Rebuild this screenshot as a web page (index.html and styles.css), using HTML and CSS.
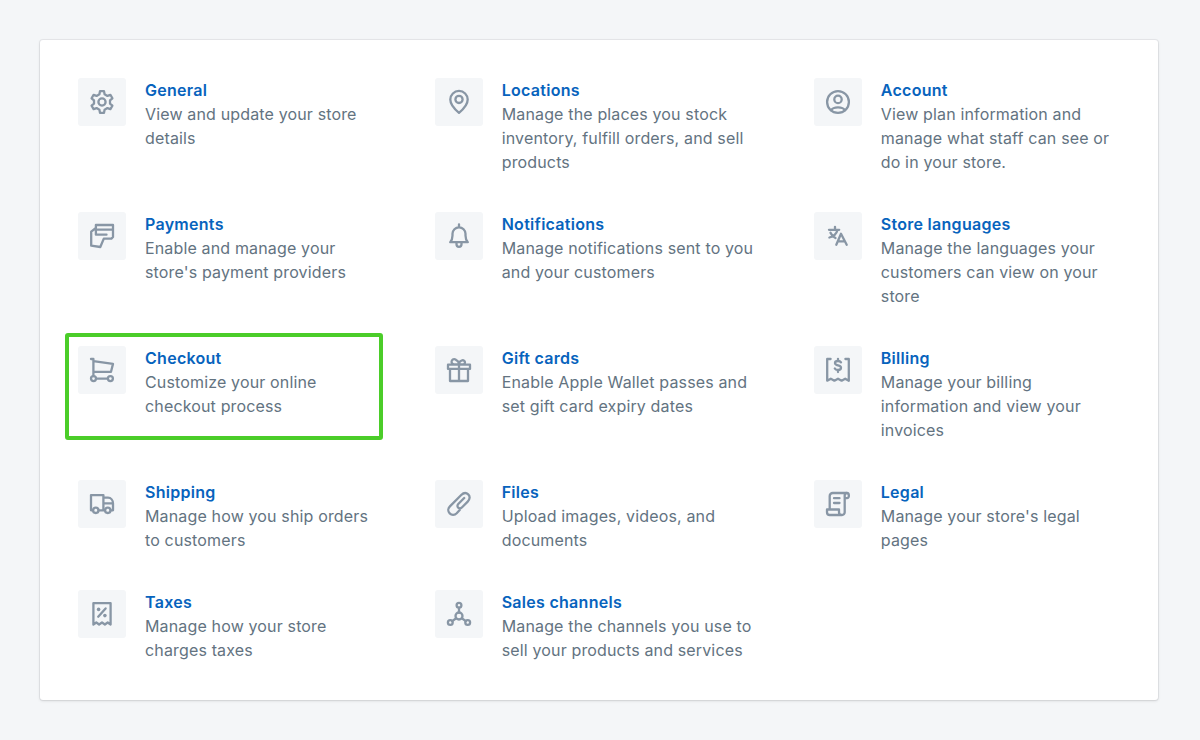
FILE: index.html
```html
<!DOCTYPE html>
<html lang="en">
<head>
<meta charset="utf-8">
<title>Settings</title>
<link rel="stylesheet" href="styles.css">
</head>
<body>
<main class="card">
  <a class="item"><span class="icon"><svg viewBox="0 0 24 24"><g transform="translate(12 12)"><path d="M-2.600-7.700-2-10.900H2L2.600-7.700 5.400-6.100 8.400-7.200 10.400-3.700 8-1.600V1.600L10.400 3.700 8.400 7.200 5.400 6.100 2.600 7.700 2 10.900H-2L-2.600 7.700-5.400 6.100-8.400 7.200-10.400 3.700-8 1.600V-1.600L-10.400-3.700-8.400-7.200-5.400-6.100Z"/><circle r="3.600"/></g></svg></span>
    <span class="text"><strong>General</strong><span>View and update your store<br>details</span></span></a>
  <a class="item"><span class="icon"><svg viewBox="0 0 24 24"><path d="M12 22.800C9.500 20.800 3.300 15.800 3.300 9.600a8.700 8.700 0 0 1 17.400 0c0 6.200-6.200 11.200-8.700 13.200Z"/><circle cx="12" cy="9.400" r="3.600"/></svg></span>
    <span class="text"><strong>Locations</strong><span>Manage the places you stock<br>inventory, fulfill orders, and sell<br>products</span></span></a>
  <a class="item"><span class="icon"><svg viewBox="0 0 24 24"><circle cx="12" cy="12" r="10.900"/><circle cx="12" cy="9.400" r="3.700"/><path d="M5 20.300c1.200-2 4-3 7-3s5.800 1 7 3"/></svg></span>
    <span class="text"><strong>Account</strong><span>View plan information and<br>manage what staff can see or<br>do in your store.</span></span></a>

  <a class="item"><span class="icon"><svg viewBox="0 0 24 24"><path d="M16.500 10.700H5.900V1H23v12l-1.600 1.600h-7.600L10.300 23 1.200 21.700V7.600L5.900 4M5.900 5.700H23"/></svg></span>
    <span class="text"><strong>Payments</strong><span>Enable and manage your<br>store's payment providers</span></span></a>
  <a class="item"><span class="icon"><svg viewBox="0 0 24 24"><path d="M12 .3v3M3.200 18.200h17.600c-1.500-1.700-2.300-3.400-2.300-6.700V9.800a6.500 6.500 0 0 0-13 0v1.700c0 3.300-.8 5-2.300 6.700ZM9.500 18.500v1.800a2.500 2.500 0 0 0 5 0v-1.800"/></svg></span>
    <span class="text"><strong>Notifications</strong><span>Manage notifications sent to you<br>and your customers</span></span></a>
  <a class="item"><span class="icon"><svg viewBox="0 0 24 24"><path d="M3 5.800h10.200M9 2.800v3M11.500 6C10.500 9.700 7.500 12.600 3.400 13.500M4.500 8.800c1 2.500 3 4.200 5 5.200M10.300 20.800 15 9.800l5.700 11M12 17.300h6.800"/></svg></span>
    <span class="text"><strong>Store languages</strong><span>Manage the languages your<br>customers can view on your<br>store</span></span></a>

  <a class="item highlighted"><span class="icon"><svg viewBox="0 0 24 24"><path d="M1 1h2.400v17M3.400 3.200 23 5.900l-2 7.900H3.400M6.300 20.600h11.400"/><circle cx="3.500" cy="20.600" r="2.500"/><circle cx="20.400" cy="20.600" r="2.500"/></svg></span>
    <span class="text"><strong>Checkout</strong><span>Customize your online<br>checkout process</span></span></a>
  <a class="item"><span class="icon"><svg viewBox="0 0 24 24"><path d="M1 6.700h22v4.200H1ZM3 10.900V23h18V10.900M12 6.700V23M12 6.500H7.200a2.700 2.700 0 1 1 2.300-4.200C11 3 12 4.500 12 6.500ZM12 6.500c0-2 1-3.500 2.700-4a2.200 2.200 0 1 1 1.800 4Z"/></svg></span>
    <span class="text"><strong>Gift cards</strong><span>Enable Apple Wallet passes and<br>set gift card expiry dates</span></span></a>
  <a class="item"><span class="icon"><svg viewBox="0 0 24 24"><path d="M4.600 1H1.200v21.700l3.600-2 3.600 2 3.600-2 3.600 2 3.600-2 3.600 2V1h-3.400M15 4.300C14.500 3.500 13.500 3 12 3c-1.800 0-3 .8-3 2.100 0 3.200 6 1.500 6 4.700 0 1.400-1.200 2.200-3 2.200-1.600 0-2.700-.5-3.200-1.500M12 .8V3M12 12v2"/></svg></span>
    <span class="text"><strong>Billing</strong><span>Manage your billing<br>information and view your<br>invoices</span></span></a>

  <a class="item"><span class="icon"><svg viewBox="0 0 24 24"><path d="M3 18.300H1V3.100h12.400v15.200H8.600M13.400 5.700H18c3 0 5 2.700 5 5.800v6.800h-2.300M13.400 11.400H23M13.400 18.300h1.500"/><circle cx="5.800" cy="18.300" r="2.700"/><circle cx="17.800" cy="18.300" r="2.700"/></svg></span>
    <span class="text"><strong>Shipping</strong><span>Manage how you ship orders<br>to customers</span></span></a>
  <a class="item"><span class="icon"><svg viewBox="0 0 24 24"><path d="m12.700 18-3 3.200c-2 2-5 2.200-7 .2s-1.800-5 .2-7L14.200 3c2.200-2.200 5-2.600 7-.7s1.900 4.900-.5 7.300l-5.600 5.600c-1.300 1.300-2.800 1.400-3.900.4s-1-2.600.3-3.900L17.200 6"/></svg></span>
    <span class="text"><strong>Files</strong><span>Upload images, videos, and<br>documents</span></span></a>
  <a class="item"><span class="icon"><svg viewBox="0 0 24 24"><path d="M20.200 1H6.700a3 3 0 0 0-3 3v13.500M16.300 23H3.800A2.800 2.800 0 0 1 1 20.200v-2.700h12v2.700A2.800 2.800 0 0 0 15.800 23h.2a2.700 2.700 0 0 0 2.700-2.700V3.600A2.500 2.500 0 0 1 21 1c2.500.2 2.500 5.200 0 5.200h-2.300M8 6.200h5.500M8 11h5.500"/></svg></span>
    <span class="text"><strong>Legal</strong><span>Manage your store's legal<br>pages</span></span></a>

  <a class="item"><span class="icon"><svg viewBox="0 0 24 24"><path d="M3.400 22.500V1.200h17.200v21.300l-2.900-2-2.800 2-2.900-2-2.900 2-2.800-2ZM15.600 6.400l-7.400 8.300"/><g class="solid"><circle cx="8.600" cy="7.400" r="1.800"/><circle cx="14.900" cy="13.600" r="1.800"/></g></svg></span>
    <span class="text"><strong>Taxes</strong><span>Manage how your store<br>charges taxes</span></span></a>
  <a class="item"><span class="icon"><svg viewBox="0 0 24 24"><circle cx="12" cy="3.200" r="2.400"/><circle cx="12" cy="14" r="3.500"/><circle cx="3.300" cy="20.500" r="2.400"/><circle cx="20.700" cy="20.500" r="2.400"/><path d="M12 5.600v4.900M9.200 16.200l-4 2.900M14.800 16.200l4 2.900"/></svg></span>
    <span class="text"><strong>Sales channels</strong><span>Manage the channels you use to<br>sell your products and services</span></span></a>
</main>
</body>
</html>
```
FILE: styles.css
```css
*, *::after { box-sizing: border-box; }
body {
  margin: 0;
  min-height: 100vh;
  padding: 40px 42px 0 40px;
  background: #f4f6f8;
  font: 16px/24px Inter, "Liberation Sans", sans-serif;
  letter-spacing: .15px;
  color: #637381;
}
.card {
  display: grid;
  grid-template-columns: 356.700px 379.100px auto;
  row-gap: 38px;
  align-content: start;
  height: 660px;
  padding: 38px 0 0 38px;
  background: #fff;
  border-radius: 3px;
  box-shadow: 0 0 0 1px rgba(63, 63, 68, .07), 0 1px 3px rgba(63, 63, 68, .16);
}
.item {
  position: relative;
  display: flex;
  gap: 19px;
  white-space: nowrap;
}
.icon {
  flex: none;
  display: grid;
  place-items: center;
  width: 48px;
  height: 48px;
  border-radius: 3px;
  background: #f4f6f8;
}
.icon svg {
  width: 24px;
  height: 24px;
  overflow: visible;
  fill: none;
  stroke: #8896a5;
  stroke-width: 2.300;
  stroke-linejoin: round;
  stroke-linecap: round;
}
.icon .solid { fill: #8896a5; stroke: none; }
.text { display: flex; flex-direction: column; }
.text strong { font-weight: 600; letter-spacing: .28px; color: #0763bd; }
.highlighted::after {
  content: "";
  position: absolute;
  left: -13px;
  top: -13px;
  width: 318px;
  height: 107px;
  border: 4px solid #4bcd29;
  border-radius: 3px;
}
```
